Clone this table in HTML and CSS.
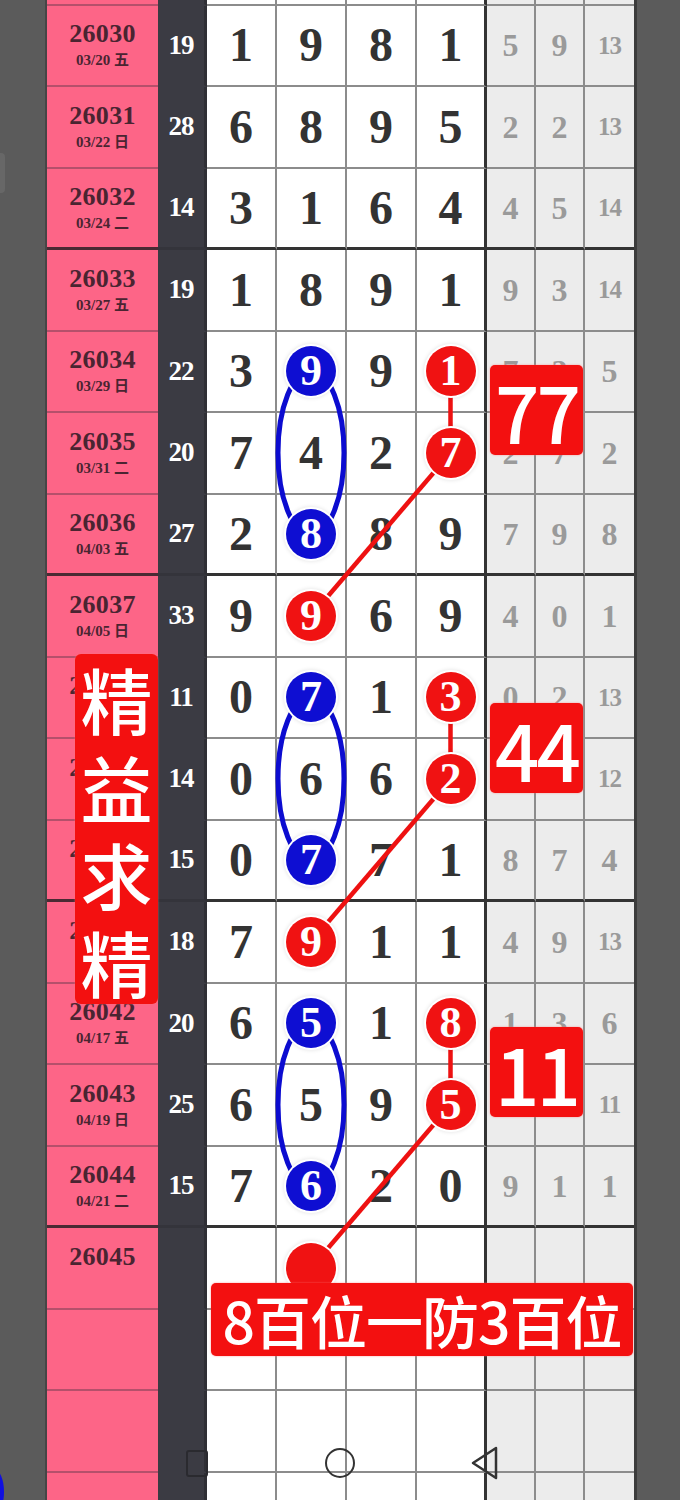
FILE: index.html
```html
<!DOCTYPE html>
<html lang="zh">
<head>
    <meta charset="UTF-8">
    <meta name="viewport" content="width=device-width, initial-scale=1.0">
    <title>排列三走势图</title>
    <link rel="stylesheet" href="styles.css">
</head>
<body>
    <div class="edge-tab"></div>
    <div class="edge-blue"></div>

    <div class="board">
        <div class="row stub">
            <div class="c issue"></div><div class="c sum"></div>
            <div class="c d"></div><div class="c d"></div><div class="c d"></div><div class="c d"></div>
            <div class="c g"></div><div class="c g"></div><div class="c g"></div>
        </div>

        <div class="row">
            <div class="c issue"><b>26030</b><small>03/20 五</small></div><div class="c sum">19</div>
            <div class="c d">1</div><div class="c d">9</div><div class="c d">8</div><div class="c d">1</div>
            <div class="c g">5</div><div class="c g">9</div><div class="c g sm">13</div>
        </div>
        <div class="row">
            <div class="c issue"><b>26031</b><small>03/22 日</small></div><div class="c sum">28</div>
            <div class="c d">6</div><div class="c d">8</div><div class="c d">9</div><div class="c d">5</div>
            <div class="c g">2</div><div class="c g">2</div><div class="c g sm">13</div>
        </div>
        <div class="row end">
            <div class="c issue"><b>26032</b><small>03/24 二</small></div><div class="c sum">14</div>
            <div class="c d">3</div><div class="c d">1</div><div class="c d">6</div><div class="c d">4</div>
            <div class="c g">4</div><div class="c g">5</div><div class="c g sm">14</div>
        </div>

        <div class="row">
            <div class="c issue"><b>26033</b><small>03/27 五</small></div><div class="c sum">19</div>
            <div class="c d">1</div><div class="c d">8</div><div class="c d">9</div><div class="c d">1</div>
            <div class="c g">9</div><div class="c g">3</div><div class="c g sm">14</div>
        </div>
        <div class="row">
            <div class="c issue"><b>26034</b><small>03/29 日</small></div><div class="c sum">22</div>
            <div class="c d">3</div><div class="c d"><span class="ball blue">9</span></div><div class="c d">9</div><div class="c d"><span class="ball red">1</span></div>
            <div class="c g">7</div><div class="c g">2</div><div class="c g">5</div>
        </div>
        <div class="row">
            <div class="c issue"><b>26035</b><small>03/31 二</small></div><div class="c sum">20</div>
            <div class="c d">7</div><div class="c d">4</div><div class="c d">2</div><div class="c d"><span class="ball red">7</span></div>
            <div class="c g">2</div><div class="c g">7</div><div class="c g">2</div>
        </div>
        <div class="row end">
            <div class="c issue"><b>26036</b><small>04/03 五</small></div><div class="c sum">27</div>
            <div class="c d">2</div><div class="c d"><span class="ball blue">8</span></div><div class="c d">8</div><div class="c d">9</div>
            <div class="c g">7</div><div class="c g">9</div><div class="c g">8</div>
        </div>

        <div class="row">
            <div class="c issue"><b>26037</b><small>04/05 日</small></div><div class="c sum">33</div>
            <div class="c d">9</div><div class="c d"><span class="ball red">9</span></div><div class="c d">6</div><div class="c d">9</div>
            <div class="c g">4</div><div class="c g">0</div><div class="c g">1</div>
        </div>
        <div class="row">
            <div class="c issue"><b>26038</b><small>04/07 二</small></div><div class="c sum">11</div>
            <div class="c d">0</div><div class="c d"><span class="ball blue">7</span></div><div class="c d">1</div><div class="c d"><span class="ball red">3</span></div>
            <div class="c g">0</div><div class="c g">2</div><div class="c g sm">13</div>
        </div>
        <div class="row">
            <div class="c issue"><b>26039</b><small>04/10 五</small></div><div class="c sum">14</div>
            <div class="c d">0</div><div class="c d">6</div><div class="c d">6</div><div class="c d"><span class="ball red">2</span></div>
            <div class="c g">3</div><div class="c g">6</div><div class="c g sm">12</div>
        </div>
        <div class="row end">
            <div class="c issue"><b>26040</b><small>04/12 日</small></div><div class="c sum">15</div>
            <div class="c d">0</div><div class="c d"><span class="ball blue">7</span></div><div class="c d">7</div><div class="c d">1</div>
            <div class="c g">8</div><div class="c g">7</div><div class="c g">4</div>
        </div>

        <div class="row">
            <div class="c issue"><b>26041</b><small>04/14 二</small></div><div class="c sum">18</div>
            <div class="c d">7</div><div class="c d"><span class="ball red">9</span></div><div class="c d">1</div><div class="c d">1</div>
            <div class="c g">4</div><div class="c g">9</div><div class="c g sm">13</div>
        </div>
        <div class="row">
            <div class="c issue"><b>26042</b><small>04/17 五</small></div><div class="c sum">20</div>
            <div class="c d">6</div><div class="c d"><span class="ball blue">5</span></div><div class="c d">1</div><div class="c d"><span class="ball red">8</span></div>
            <div class="c g">1</div><div class="c g">3</div><div class="c g">6</div>
        </div>
        <div class="row">
            <div class="c issue"><b>26043</b><small>04/19 日</small></div><div class="c sum">25</div>
            <div class="c d">6</div><div class="c d">5</div><div class="c d">9</div><div class="c d"><span class="ball red">5</span></div>
            <div class="c g">4</div><div class="c g">5</div><div class="c g sm">11</div>
        </div>
        <div class="row end">
            <div class="c issue"><b>26044</b><small>04/21 二</small></div><div class="c sum">15</div>
            <div class="c d">7</div><div class="c d"><span class="ball blue">6</span></div><div class="c d">2</div><div class="c d">0</div>
            <div class="c g">9</div><div class="c g">1</div><div class="c g">1</div>
        </div>

        <div class="row">
            <div class="c issue"><b>26045</b><small>&nbsp;</small></div><div class="c sum"></div>
            <div class="c d"></div><div class="c d"><span class="ball red"></span></div><div class="c d"></div><div class="c d"></div>
            <div class="c g"></div><div class="c g"></div><div class="c g"></div>
        </div>
        <div class="row">
            <div class="c issue"></div><div class="c sum"></div>
            <div class="c d"></div><div class="c d"></div><div class="c d"></div><div class="c d"></div>
            <div class="c g"></div><div class="c g"></div><div class="c g"></div>
        </div>
        <div class="row">
            <div class="c issue"></div><div class="c sum"></div>
            <div class="c d"></div><div class="c d"></div><div class="c d"></div><div class="c d"></div>
            <div class="c g"></div><div class="c g"></div><div class="c g"></div>
        </div>
        <div class="row">
            <div class="c issue"></div><div class="c sum"></div>
            <div class="c d"></div><div class="c d"></div><div class="c d"></div><div class="c d"></div>
            <div class="c g"></div><div class="c g"></div><div class="c g"></div>
        </div>

        <!-- connecting lines drawn over the grid, under the balls -->
        <svg class="links" width="587" height="1500" viewBox="0 0 587 1500">
            <g fill="none" stroke="#0c0cd0" stroke-width="5">
                <ellipse cx="264" cy="452.75" rx="33" ry="82"/>
                <ellipse cx="264" cy="778.75" rx="33" ry="82"/>
                <ellipse cx="264" cy="1104.75" rx="33" ry="82"/>
            </g>
            <g stroke="#ee1111" stroke-width="4.5">
                <line x1="403.5" y1="371" x2="403.5" y2="453"/>
                <line x1="403.5" y1="453" x2="264" y2="616"/>
                <line x1="403.5" y1="697" x2="403.5" y2="779"/>
                <line x1="403.5" y1="779" x2="264" y2="942"/>
                <line x1="403.5" y1="1023" x2="403.5" y2="1105"/>
                <line x1="403.5" y1="1105" x2="264" y2="1268"/>
            </g>
        </svg>

        <div class="tag num t77">77</div>
        <div class="tag num t44">44</div>
        <div class="tag num t11">11</div>
        <div class="tag note">8百位一防3百位</div>
        <div class="tag label">精益求精</div>
    </div>

    <!-- system navigation bar -->
    <div class="nav-square"></div>
    <div class="nav-circle"></div>
    <svg class="nav-back" width="30" height="34" viewBox="0 0 30 34">
        <path d="M26 2 L3 17 L26 32 Z" fill="none" stroke="#333" stroke-width="2.5" stroke-linejoin="round"/>
    </svg>
</body>
</html>
```

FILE: styles.css
```css
/* lottery trend chart */
html, body {
    height: 1500px;
}

body {
    margin: 0;
    overflow: hidden;
    background: #5b5b5b;
    font-family: 'Liberation Serif', 'Noto Sans CJK SC', serif;
    position: relative;
}

.board {
    position: relative;
    margin-left: 45px;
    width: 587px;
    border-left: 2px solid #464646;
    border-right: 3px solid #3c3c3c;
}

.row {
    display: grid;
    grid-template-columns: 111px 49px 70px 70px 70px 70px 49px 49px 49px;
    height: 81.5px;
}

.row.stub {
    height: 5.5px;
}

.c {
    box-sizing: border-box;
    display: flex;
    align-items: center;
    justify-content: center;
    line-height: 1;
    font-weight: bold;
    border-bottom: 2px solid #8c8c8c;
}

.issue {
    flex-direction: column;
    background: #fd6587;
    color: #4a2431;
    border-bottom-color: #b5506b;
}

.issue b {
    font-size: 26px;
    line-height: 26px;
    letter-spacing: 0.3px;
}

.issue small {
    font-size: 15px;
    line-height: 18px;
    margin-top: 4px;
}

.sum {
    background: #3b3b43;
    color: #fff;
    font-size: 27px;
    letter-spacing: -1px;
    border-right: 3px solid #2f2f35;
    border-bottom-color: #3b3b43;
}

.d {
    background: #fff;
    color: #333;
    font-size: 48px;
    border-right: 2px solid #8c8c8c;
}

.d:nth-child(6) {
    border-right: 3px solid #333;
}

.g {
    background: #ececec;
    color: #9a9a9a;
    font-size: 32px;
    border-right: 2px solid #8c8c8c;
}

.g:last-child {
    border-right: none;
}

.g.sm {
    font-size: 25px;
    letter-spacing: -1px;
}

.row.end .c {
    border-bottom: 3px solid #333;
}

.row.end .issue {
    border-bottom-color: #4a2a33;
}

.row.end .sum {
    border-bottom-color: #34343b;
}

/* balls */
.ball {
    position: relative;
    z-index: 2;
    width: 50px;
    height: 50px;
    border-radius: 50%;
    display: flex;
    align-items: center;
    justify-content: center;
    color: #fff;
    font-size: 44px;
    box-shadow: 0 0 0 2px #fff, 0 0 4px 2px rgba(0, 0, 0, 0.12);
}

.ball.blue {
    background: #0e0ed2;
}

.ball.red {
    background: #f01212;
}

.links {
    position: absolute;
    top: 0;
    left: 0;
    z-index: 1;
    pointer-events: none;
}

/* red tags */
.tag {
    position: absolute;
    z-index: 3;
    display: flex;
    align-items: center;
    justify-content: center;
    background: #f31010;
    color: #fff;
    border-radius: 5px;
    font-family: 'Noto Sans CJK SC', 'Noto Sans', sans-serif;
    font-weight: 500;
    box-shadow: 0 0 2px rgba(255, 120, 120, 0.8);
}

.tag.num {
    width: 93px;
    height: 90px;
    left: 443px;
    font-size: 78px;
    letter-spacing: -3px;
    line-height: 1;
}

.t77 { top: 365px; }
.t44 { top: 703px; }
.t11 { top: 1027px; left: 445px; }

.tag.note {
    left: 164px;
    top: 1283px;
    width: 422px;
    height: 73px;
    font-size: 57px;
    letter-spacing: -1px;
    line-height: 1;
}

.tag.label {
    display: block;
    left: 28px;
    top: 654px;
    width: 83px;
    height: 350px;
    font-size: 72px;
    line-height: 87.5px;
    text-align: center;
    border-radius: 6px;
}

/* screen edge bits */
.edge-tab {
    position: absolute;
    left: -4px;
    top: 153px;
    width: 9px;
    height: 40px;
    border-radius: 4px;
    background: #676767;
}

.edge-blue {
    position: absolute;
    left: -14px;
    top: 1470px;
    width: 18px;
    height: 44px;
    border-radius: 50%;
    background: #1010e0;
}

/* navigation bar */
.nav-square {
    position: absolute;
    left: 186px;
    top: 1450px;
    width: 18px;
    height: 23px;
    border: 2.5px solid #2a2a2f;
    border-radius: 3px;
}

.nav-circle {
    position: absolute;
    left: 325px;
    top: 1448px;
    width: 26px;
    height: 26px;
    border: 2.5px solid #333;
    border-radius: 50%;
}

.nav-back {
    position: absolute;
    left: 470px;
    top: 1446px;
}
```
